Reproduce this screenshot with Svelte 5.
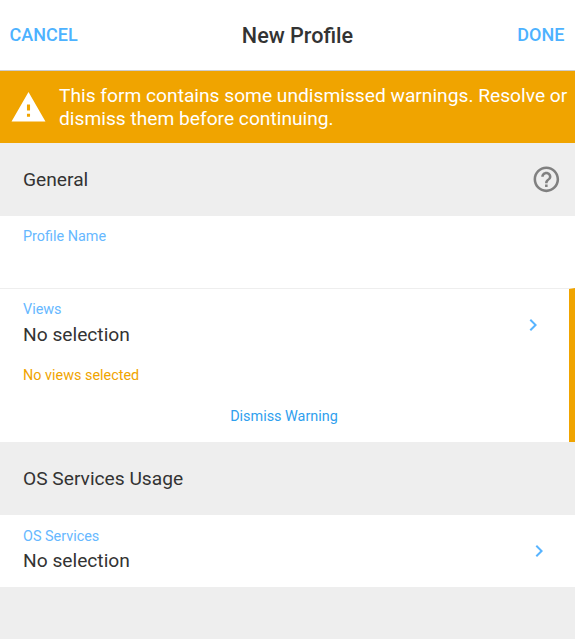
<script lang="ts">
  let profileName = $state('');

  const banner = 'This form contains some undismissed warnings. Resolve or dismiss them before continuing.';
</script>

{#snippet chevron()}
  <svg class="chevron" viewBox="0 0 24 24" fill="currentColor" aria-hidden="true">
    <path d="M10 6 8.59 7.41 13.17 12l-4.58 4.59L10 18l6-6z" />
  </svg>
{/snippet}

<div class="page">
  <header class="toolbar">
    <button type="button" class="action">CANCEL</button>
    <h1>New Profile</h1>
    <button type="button" class="action">DONE</button>
  </header>

  <div class="banner" role="alert">
    <svg viewBox="0 0 24 24" fill="currentColor" aria-hidden="true">
      <path d="M1 21h22L12 2 1 21zm12-3h-2v-2h2v2zm0-4h-2v-4h2v4z" />
    </svg>
    <p>{banner}</p>
  </div>

  <div class="section">
    <h2>General</h2>
    <button type="button" class="help" aria-label="Help">
      <svg viewBox="0 0 24 24" fill="currentColor" aria-hidden="true">
        <path d="M11 18h2v-2h-2v2zm1-16C6.48 2 2 6.48 2 12s4.48 10 10 10 10-4.48 10-10S17.52 2 12 2zm0 18c-4.41 0-8-3.59-8-8s3.59-8 8-8 8 3.59 8 8-3.59 8-8 8zm0-14c-2.21 0-4 1.79-4 4h2c0-1.1.9-2 2-2s2 .9 2 2c0 2-3 1.75-3 5h2c0-2.25 3-2.5 3-5 0-2.21-1.79-4-4-4z" />
      </svg>
    </button>
  </div>

  <div class="field">
    <label class="label" for="profile-name">Profile Name</label>
    <input id="profile-name" type="text" bind:value={profileName} />
  </div>

  <div class="warned">
    <div class="field picker">
      <div>
        <div class="label">Views</div>
        <div class="value">No selection</div>
      </div>
      {@render chevron()}
    </div>
    <div class="message">No views selected</div>
    <button type="button" class="dismiss">Dismiss Warning</button>
  </div>

  <div class="section">
    <h2>OS Services Usage</h2>
  </div>

  <div class="field picker last">
    <div>
      <div class="label">OS Services</div>
      <div class="value">No selection</div>
    </div>
    {@render chevron()}
  </div>
</div>

<style>
  :global(body) { margin: 0; background: #eee; }

  .page {
    min-height: 639px;
    background: #eee;
    color: #333;
    font-family: Roboto, sans-serif;
    font-size: 19.2px;
  }
  h1, h2, p { margin: 0; }
  button { padding: 0; border: none; background: none; font: inherit; cursor: pointer; }

  .toolbar {
    display: flex;
    align-items: center;
    justify-content: space-between;
    box-sizing: border-box;
    height: 71px;
    padding: 0 10.6px 0 9.6px;
    background: #fff;
    border-bottom: 1px solid #ccc;
  }
  .toolbar h1 { padding-top: 1px; font-size: 21.6px; font-weight: 500; line-height: 26px; }
  .action { color: #4db2ff; font-size: 18px; font-weight: 500; line-height: 22px; }

  .banner {
    display: flex;
    align-items: center;
    box-sizing: border-box;
    height: 72px;
    padding-left: 10px;
    background: #f0a400;
    color: #fff;
  }
  .banner svg { flex: none; width: 37px; height: 37px; margin-right: 12px; }
  .banner p { line-height: 23px; }

  .section {
    display: flex;
    align-items: center;
    justify-content: space-between;
    box-sizing: border-box;
    height: 73px;
    padding: 0 13px 0 23px;
  }
  .section h2 { font-size: 19.2px; font-weight: 400; line-height: 23px; }
  .help { display: flex; padding-bottom: 1px; color: #808080; }
  .help svg { width: 30.7px; height: 30.7px; }

  .field {
    box-sizing: border-box;
    height: 72px;
    padding: 12px 23px 0;
    background: #fff;
  }
  .picker { display: flex; justify-content: space-between; padding-right: 24px; }
  .label { display: block; color: #66b8ff; font-size: 14.4px; line-height: 17px; }
  .value { margin-top: 5px; line-height: 23px; }
  .last .label { padding-top: 1px; }
  .last .value { margin-top: 4px; }
  input {
    display: block;
    width: 100%;
    height: 28px;
    padding: 0;
    border: none;
    outline: none;
    background: none;
    color: inherit;
    font: inherit;
  }
  .chevron { flex: none; width: 24px; height: 24px; margin-top: 12px; color: #58b4ff; }

  .warned {
    display: flex;
    flex-direction: column;
    box-sizing: border-box;
    height: 154px;
    background: #fff;
    border-top: 1px solid #eee;
    border-right: 6px solid #f0a400;
  }
  .message {
    margin: 6px 23px 0;
    color: #f0a400;
    font-size: 14.4px;
    line-height: 17px;
  }
  .dismiss {
    align-self: center;
    margin: 24px 1px 0 0;
    color: #2fa0ee;
    font-size: 14.4px;
    line-height: 17px;
  }
</style>
